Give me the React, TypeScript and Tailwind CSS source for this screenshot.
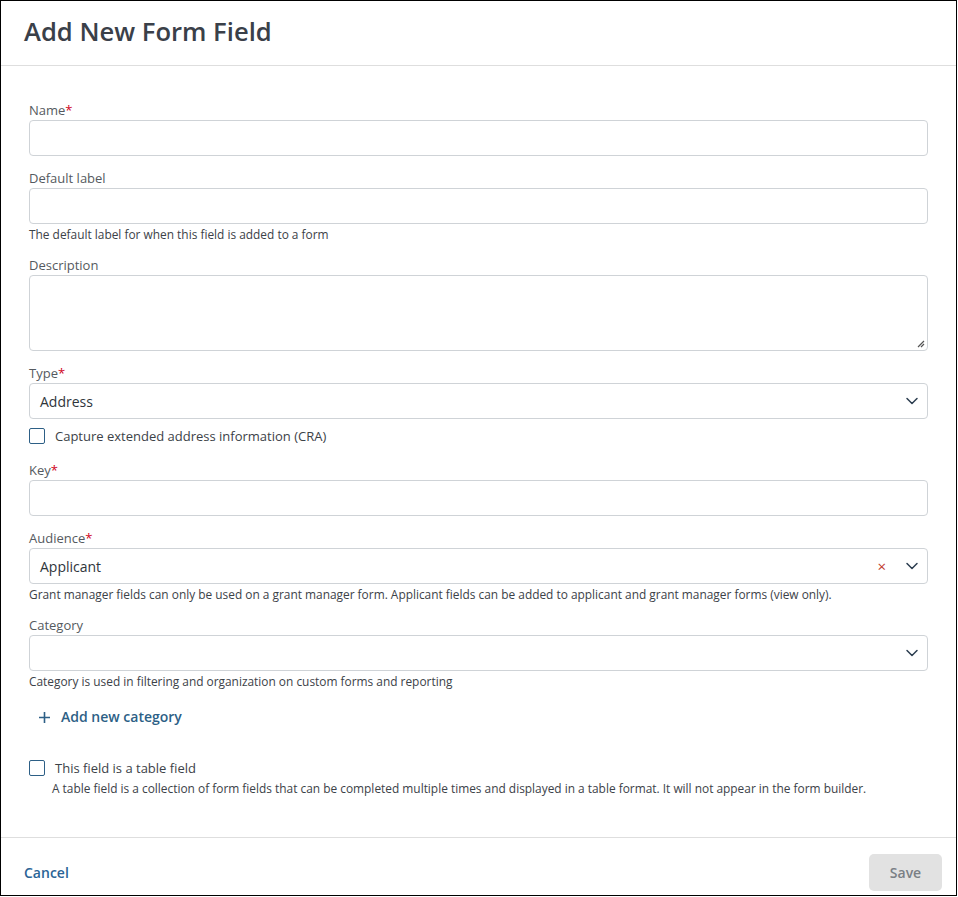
import React from "react";

const font = { fontFamily: '"Open Sans", "Noto Sans", sans-serif' };

function Label({ text, required }: { text: string; required?: boolean }) {
  return (
    <div className="text-[13px] leading-[18px] text-[#555a60] mb-[1px]">
      {text}
      {required && <span className="text-[#d0021b]">*</span>}
    </div>
  );
}

function Chevron() {
  return (
    <svg width="14" height="14" viewBox="0 0 14 14" fill="none">
      <path d="M2 4.5 L7 9.5 L12 4.5" stroke="#2c3e50" strokeWidth="1.5" strokeLinecap="round" strokeLinejoin="round" />
    </svg>
  );
}

function Input() {
  return <div className="h-[36px] border border-[#cfd3d7] rounded-[4px] bg-white" />;
}

function Help({ text }: { text: string }) {
  return <div className="text-[11.9px] leading-[16px] text-[#3c4248] mt-[2px]">{text}</div>;
}

function Checkbox() {
  return <div className="w-[16px] h-[16px] border-[1.5px] border-[#2d5f86] rounded-[2px] bg-white shrink-0" />;
}

export default function App() {
  return (
    <div style={font} className="w-[957px] h-[896px] border border-black bg-white flex flex-col">
      <div className="h-[65px] border-b border-[#dedede] flex items-center px-[23px] shrink-0">
        <h1 className="text-[25.6px] font-semibold text-[#3a4049] leading-none pb-[3px]">Add New Form Field</h1>
      </div>
      <div className="flex-1 px-[28px] pt-[35px] pr-[28px]">
        <Label text="Name" required />
        <Input />
        <div className="h-[13px]" />
        <Label text="Default label" />
        <Input />
        <Help text="The default label for when this field is added to a form" />
        <div className="h-[14px]" />
        <Label text="Description" />
        <div className="relative h-[76px] border border-[#cfd3d7] rounded-[4px]">
          <svg className="absolute right-[2px] bottom-[2px]" width="9" height="9" viewBox="0 0 9 9">
            <path d="M8 2 L2 8 M8 5 L5 8" stroke="#555" strokeWidth="1.2" />
          </svg>
        </div>
        <div className="h-[13px]" />
        <Label text="Type" required />
        <div className="h-[36px] border border-[#cfd3d7] rounded-[4px] flex items-center pl-[10px] pr-[3px]">
          <span className="flex-1 text-[14px] text-[#2f353b]">Address</span>
          <span className="w-[24px] flex justify-center"><Chevron /></span>
        </div>
        <div className="flex items-center mt-[8px] gap-[10px] h-[18px]">
          <Checkbox />
          <span className="text-[13px] leading-[18px] text-[#3c4248]">Capture extended address information (CRA)</span>
        </div>
        <div className="h-[16px]" />
        <Label text="Key" required />
        <Input />
        <div className="h-[13px]" />
        <Label text="Audience" required />
        <div className="h-[36px] border border-[#cfd3d7] rounded-[4px] flex items-center pl-[10px] pr-[3px]">
          <span className="flex-1 text-[14px] text-[#2f353b]">Applicant</span>
          <span className="text-[#c0392b] text-[15px] mr-[14px] leading-none">×</span>
          <span className="w-[24px] flex justify-center"><Chevron /></span>
        </div>
        <Help text="Grant manager fields can only be used on a grant manager form. Applicant fields can be added to applicant and grant manager forms (view only)." />
        <div className="h-[14px]" />
        <Label text="Category" />
        <div className="h-[36px] border border-[#cfd3d7] rounded-[4px] flex items-center pl-[10px] pr-[3px]">
          <span className="flex-1" />
          <span className="w-[24px] flex justify-center"><Chevron /></span>
        </div>
        <Help text="Category is used in filtering and organization on custom forms and reporting" />
        <div className="flex items-center gap-[10px] mt-[18px] ml-[9px] h-[20px] text-[#2d5f86]">
          <svg width="13" height="13" viewBox="0 0 13 13"><path d="M6.5 1 V12 M1 6.5 H12" stroke="#2d5f86" strokeWidth="1.6" /></svg>
          <span className="text-[14px] font-semibold leading-[20px]">Add new category</span>
        </div>
        <div className="flex items-center mt-[32px] gap-[10px] h-[18px]">
          <Checkbox />
          <span className="text-[13px] leading-[18px] text-[#3c4248]">This field is a table field</span>
        </div>
        <div className="ml-[23px] mt-[3px] text-[11.9px] leading-[16px] text-[#3c4248]">
          A table field is a collection of form fields that can be completed multiple times and displayed in a table format. It will not appear in the form builder.
        </div>
      </div>
      <div className="h-[58px] border-t border-[#dedede] flex items-start justify-between pt-[16px] pl-[23px] pr-[14px] shrink-0">
        <span className="text-[14px] font-semibold text-[#2a6496] leading-[37px]">Cancel</span>
        <div className="w-[73px] h-[37px] rounded-[5px] bg-[#e2e2e2] flex items-center justify-center text-[14px] font-semibold text-[#7a7f85]">Save</div>
      </div>
    </div>
  );
}
